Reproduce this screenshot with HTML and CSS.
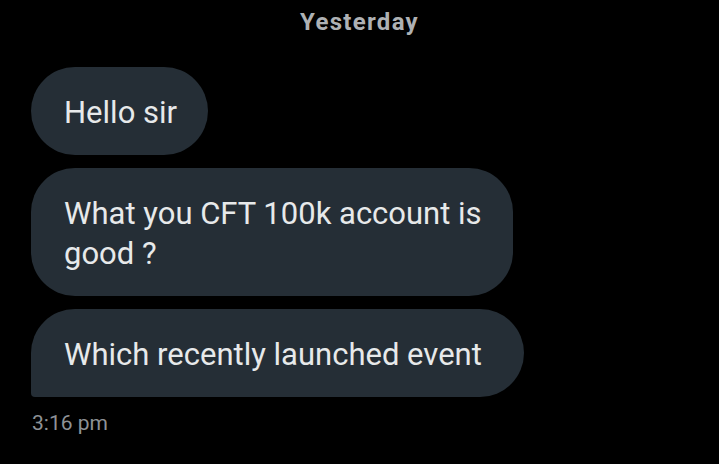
FILE: index.html
```html
<!DOCTYPE html>
<html lang="en">
<head>
    <meta charset="UTF-8">
    <meta name="viewport" content="width=device-width, initial-scale=1.0">
    <title>Messages</title>
    <link rel="stylesheet" href="styles.css">
</head>
<body>
    <div class="chat">
        <div class="day">Yesterday</div>
        <div class="group">
            <div class="bubble">Hello sir</div>
            <div class="bubble">What you CFT 100k account is good ?</div>
            <div class="bubble last">Which recently launched event</div>
        </div>
        <div class="time">3:16 pm</div>
    </div>
</body>
</html>
```

FILE: styles.css
```css
body {
    margin: 0;
    background-color: #000;
    font-family: Roboto, "Noto Sans", sans-serif;
    color: #e7e9ea;
}
.chat {
    padding: 8px 0 0 31px;
    width: 719px;
    height: 464px;
    box-sizing: border-box;
}
.day {
    text-align: center;
    margin-left: -31px;
    margin-right: 0;
    font-size: 24px;
    font-weight: bold;
    letter-spacing: 1.3px;
    line-height: 28px;
    color: #aeb1b4;
}
.group {
    display: flex;
    flex-direction: column;
    align-items: flex-start;
    gap: 13px;
    margin-top: 31px;
}
.bubble {
    background-color: #252e36;
    border-radius: 44px;
    padding: 26px 31px 22px 33px;
    font-size: 31px;
    line-height: 40px;
    max-width: 482px;
    box-sizing: border-box;
    white-space: normal;
}
.bubble.last {
    border-bottom-left-radius: 4px;
    padding-right: 42px;
    max-width: 520px;
}
.time {
    margin-top: 14px;
    margin-left: 1px;
    font-size: 21px;
    line-height: 24px;
    color: #8e9296;
}
```
